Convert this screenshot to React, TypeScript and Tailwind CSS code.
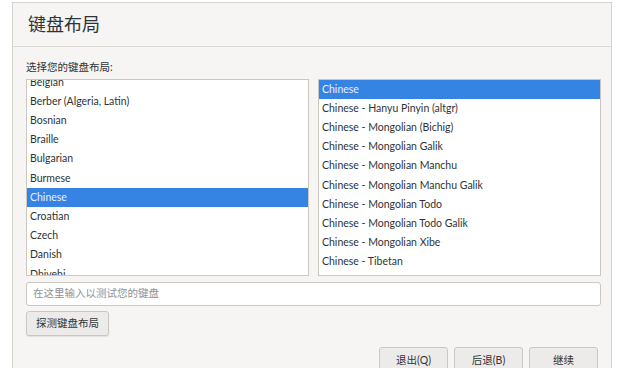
import React from 'react';

const left = ['Belgian', 'Berber (Algeria, Latin)', 'Bosnian', 'Braille', 'Bulgarian', 'Burmese', 'Chinese', 'Croatian', 'Czech', 'Danish', 'Dhivehi'];
const right = [
  'Chinese',
  'Chinese - Hanyu Pinyin (altgr)',
  'Chinese - Mongolian (Bichig)',
  'Chinese - Mongolian Galik',
  'Chinese - Mongolian Manchu',
  'Chinese - Mongolian Manchu Galik',
  'Chinese - Mongolian Todo',
  'Chinese - Mongolian Todo Galik',
  'Chinese - Mongolian Xibe',
  'Chinese - Tibetan',
];

const font = { fontFamily: 'Lato, "Noto Sans CJK SC", sans-serif' };

const Row: React.FC<{ text: string; active?: boolean }> = ({ text, active }) => (
  <div className={`h-[19.2px] px-[3px] flex items-center text-[10.5px] ${active ? 'bg-[#3584e4] text-[#e8f0fb]' : 'text-[#2e3436]'}`}>
    {text}
  </div>
);

const App: React.FC = () => {
  return (
    <div className="w-[620px] h-[368px] bg-white overflow-hidden" style={font}>
      <div className="ml-[12px] mt-[2px] w-[600px] h-[366px] bg-[#f6f5f4] border-l border-r border-t border-[#d5d2ce] flex flex-col overflow-hidden">
        {/* Header */}
        <div className="shrink-0 h-[44px] border-b border-[#dcd9d5] flex items-center pl-[15px]">
          <span className="text-[18px] text-[#2e3436]">键盘布局</span>
        </div>

        <div className="shrink-0 pl-[13px] pt-[13px] flex flex-col">
          <div className="text-[10.5px] text-[#2e3436] leading-[14px]">选择您的键盘布局:</div>

          <div className="mt-[5px] flex gap-[9px]">
            <div className="shrink-0 w-[283px] h-[197px] bg-white border border-[#cdc7c2] overflow-hidden">
              <div className="-mt-[7px]">
                {left.map((t) => (
                  <Row key={t} text={t} active={t === 'Chinese'} />
                ))}
              </div>
            </div>
            <div className="shrink-0 w-[283px] h-[197px] bg-white border border-[#cdc7c2] overflow-hidden">
              {right.map((t, i) => (
                <Row key={t} text={t} active={i === 0} />
              ))}
            </div>
          </div>

          <div className="mt-[6px] w-[575px] h-[24px] bg-white border border-[#cdc7c2] rounded-[3px] flex items-center px-[6px] text-[10.5px] text-[#8f9296]">
            在这里输入以测试您的键盘
          </div>

          <div className="mt-[5px] w-[83px] h-[25px] border border-[#cdc7c2] rounded-[3px] bg-[#edebe9] shadow-[0_1px_1px_rgba(0,0,0,0.08)] flex items-center justify-center text-[10.5px] text-[#2e3436]">
            探测键盘布局
          </div>

          <div className="mt-[11px] w-[572px] flex justify-end gap-[6px]">
            {['退出(Q)', '后退(B)', '继续'].map((b) => (
              <div key={b} className="w-[69px] h-[28px] border border-[#cdc7c2] rounded-[3px] bg-[#edebe9] flex items-center justify-center text-[10.5px] text-[#2e3436]">
                {b}
              </div>
            ))}
          </div>
        </div>
      </div>
    </div>
  );
};

export default App;
